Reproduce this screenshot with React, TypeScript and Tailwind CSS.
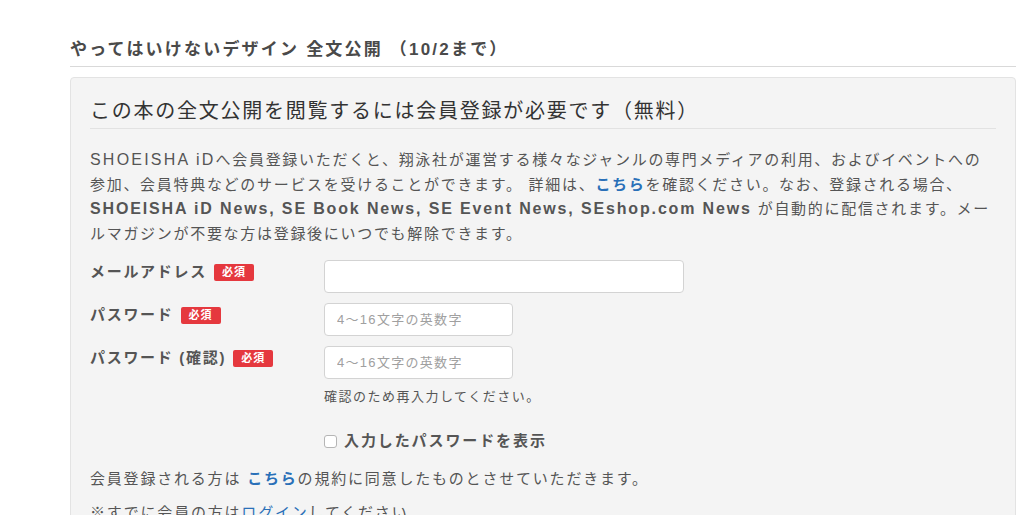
import React from "react";

const FONT = { fontFamily: '"Liberation Sans", "Noto Sans CJK JP", sans-serif' };

function Badge() {
  return (
    <span className="ml-[7px] inline-flex h-[17px] items-center rounded-[2px] bg-[#e5383e] px-[8px] text-[11px] font-bold leading-none tracking-[1px] text-white">
      必須
    </span>
  );
}

function Label({ children }: { children: React.ReactNode }) {
  return (
    <div className="flex items-center self-start text-[15px] font-bold leading-[24px] tracking-[1.7px] text-[#555]">
      <span className="whitespace-nowrap">{children}</span>
      <Badge />
    </div>
  );
}

export default function App() {
  return (
    <div className="min-h-[515px] w-[1024px] overflow-hidden bg-white" style={FONT}>
      <div className="ml-[70px] w-[946px]">
        <div className="border-b border-[#d9d9d9] pt-[38px] pb-[4px] text-[17px] font-bold leading-[24px] tracking-[2.2px] text-[#4a4a4a] whitespace-nowrap">
          やってはいけないデザイン 全文公開 （10/2まで）
        </div>
        <div className="mt-[10px] h-[500px] rounded-[4px] border border-[#e3e3e3] bg-[#f4f4f4] px-[19px] pt-[18px]">
          <div className="border-b border-[#e2e2e2] pb-[2px] text-[20px] leading-[30px] tracking-[1.75px] text-[#333] whitespace-nowrap">
            この本の全文公開を閲覧するには会員登録が必要です（無料）
          </div>
          <p className="mt-[19px] text-[15px] leading-[24.5px] tracking-[1.7px] text-[#555] whitespace-nowrap">
            <span className="text-[16px] tracking-[2.2px]">SHOEISHA iD</span>へ会員登録いただくと、翔泳社が運営する様々なジャンルの専門メディアの利用、およびイベントへの
            <br />
            参加、会員特典などのサービスを受けることができます。 詳細は、
            <a className="font-bold text-[#2a70b8]">こちら</a>
            を確認ください。なお、登録される場合、
            <br />
            <b className="text-[16px] tracking-[1.85px]">SHOEISHA iD News, SE Book News, SE Event News, SEshop.com News</b> が自動的に配信されます。メー
            <br />
            ルマガジンが不要な方は登録後にいつでも解除できます。
          </p>

          <div className="mt-[14px] grid grid-cols-[234px_1fr] items-start gap-y-[10px]">
            <Label>メールアドレス</Label>
            <input
              className="h-[33px] w-[360px] rounded-[4px] border border-[#d3d3d3] bg-white px-[12px] text-[13px] tracking-[1.3px] outline-none"
              type="text"
            />
            <Label>パスワード</Label>
            <input
              className="h-[33px] w-[189px] rounded-[4px] border border-[#d3d3d3] bg-white px-[12px] text-[13px] tracking-[1.3px] text-[#555] outline-none placeholder:text-[#a0a0a0]"
              type="text"
              placeholder="4〜16文字の英数字"
            />
            <Label>パスワード (確認)</Label>
            <div>
              <input
                className="h-[33px] w-[189px] rounded-[4px] border border-[#d3d3d3] bg-white px-[12px] text-[13px] tracking-[1.3px] text-[#555] outline-none placeholder:text-[#a0a0a0]"
                type="text"
                placeholder="4〜16文字の英数字"
              />
              <div className="mt-[8px] text-[13px] leading-[20px] tracking-[1.5px] text-[#555] whitespace-nowrap">
                確認のため再入力してください。
              </div>
              <label className="mt-[22px] flex items-center text-[15px] font-bold leading-[24px] tracking-[1.9px] text-[#555] whitespace-nowrap">
                <span className="mr-[7px] inline-block h-[13px] w-[13px] rounded-[3px] border border-[#b5b5b5] bg-white" />
                入力したパスワードを表示
              </label>
            </div>
          </div>

          <p className="mt-[14px] text-[15px] leading-[24px] tracking-[1.8px] text-[#555] whitespace-nowrap">
            会員登録される方は <a className="font-bold text-[#2a70b8]">こちら</a>の規約に同意したものとさせていただきます。
          </p>
          <p className="mt-[10px] text-[15px] leading-[24px] tracking-[1.8px] text-[#555] whitespace-nowrap">
            ※すでに会員の方は<a className="text-[#2a70b8]">ログイン</a>してください。
          </p>
        </div>
      </div>
    </div>
  );
}
